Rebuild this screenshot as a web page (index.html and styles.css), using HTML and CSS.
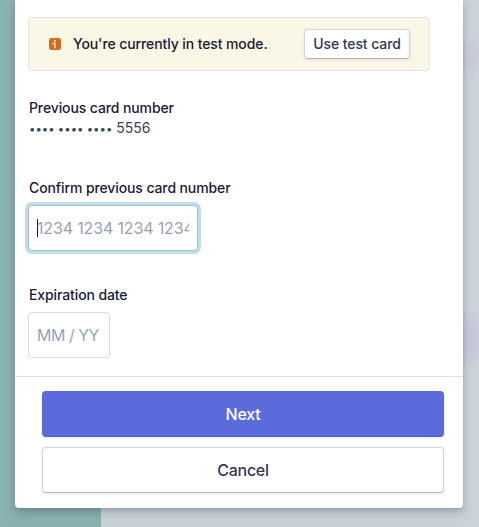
FILE: index.html
```html
<!DOCTYPE html>
<html lang="en">
<head>
<meta charset="utf-8">
<title>Confirm card</title>
<link rel="stylesheet" href="styles.css">
</head>
<body>
<main class="dialog">
  <section class="content">
    <div class="notice">
      <svg class="notice-icon" viewBox="0 0 12 12" aria-hidden="true">
        <rect width="12" height="12" rx="2" fill="#d56b21"/>
        <circle cx="6" cy="3" r="1" fill="#fff4df"/>
        <path d="M4 5.5h2.1v4.1" fill="none" stroke="#fff4df" stroke-width="1.3" stroke-linecap="round" stroke-linejoin="round"/>
      </svg>
      <span class="notice-text">You're currently in test mode.</span>
      <button class="button small">Use test card</button>
    </div>
    <div class="previous">
      <div class="label">Previous card number</div>
      <div class="masked"><span class="dots">•••• •••• ••••</span> 5556</div>
    </div>
    <div class="field confirm">
      <div class="label">Confirm previous card number</div>
      <div class="input focused"><span class="caret"></span><span class="placeholder">1234 1234 1234 1234</span></div>
    </div>
    <div class="field">
      <div class="label">Expiration date</div>
      <div class="input short"><span class="placeholder">MM / YY</span></div>
    </div>
  </section>
  <footer class="actions">
    <button class="button primary">Next</button>
    <button class="button">Cancel</button>
  </footer>
</main>
</body>
</html>
```
FILE: styles.css
```css
* { box-sizing: border-box; }
body {
  margin: 0;
  height: 527px;
  overflow: hidden;
  padding: 0 16px 19px 15px;
  font-family: Inter, "Liberation Sans", sans-serif;
  font-size: 14px;
  color: #1a1b32;
  background:
    linear-gradient(90deg, #8ab2b1 101px, transparent 101px),
    linear-gradient(#cbd3da 36px, #c6cdd8 55px, #cbd3da 80px, #cbd3da 312px, #c4cad8 328px, #c4cad8 350px, #cbd3da 368px);
}
.dialog {
  display: flex;
  flex-direction: column;
  height: 508px;
  background: #fff;
  border-radius: 0 0 4px 4px;
  box-shadow: 0 7px 14px rgba(60,66,87,.12), 0 3px 6px rgba(0,0,0,.18);
}
.content {
  height: 376px;
  padding: 17px 33px 0 13px;
}
.notice {
  display: flex;
  align-items: center;
  height: 54px;
  padding: 0 19px 0 20px;
  border: 1px solid #e0e4e8;
  border-radius: 4px;
  background: #fbf7e6;
}
.notice-icon { width: 12px; height: 12px; margin-right: 12px; }
.notice-text { font-weight: 500; line-height: 20px; letter-spacing: -.1px; }
.button {
  height: 46px;
  padding: 0;
  border: 1px solid #d5d5d7;
  border-bottom-color: #b5b5b7;
  border-radius: 4px;
  background: #fff;
  box-shadow: 0 1px 3px rgba(60,66,87,.12);
  color: #353850;
  font: 500 16px/20px Inter, "Liberation Sans", sans-serif;
  letter-spacing: -.25px;
}
.small {
  width: 106px;
  height: 30px;
  margin-left: auto;
  font-size: 14px;
  letter-spacing: -.08px;
}
.label {
  padding-left: 1px;
  font-weight: 500;
  line-height: 20px;
  letter-spacing: -.11px;
}
.previous { margin-top: 27px; }
.masked {
  height: 20px;
  padding-left: 1px;
  line-height: 20px;
  color: #3c4257;
}
.dots { font-size: 11.4px; line-height: 1; }
.confirm { margin: 40px 0 34px; }
.input {
  display: flex;
  align-items: center;
  width: 170px;
  height: 46px;
  margin-top: 7px;
  padding: 0 8px;
  border: 1px solid #d8dbe0;
  border-radius: 4px;
  background: #fff;
  color: #98a3b2;
  font-size: 16px;
}
.focused {
  border-color: #a2bfd3;
  box-shadow: 0 0 0 3px #bfdced;
}
.short { width: 82px; }
.placeholder {
  flex: 1;
  overflow: hidden;
  white-space: nowrap;
  letter-spacing: -.15px;
}
.short .placeholder { letter-spacing: -.5px; }
.caret {
  width: 1px;
  height: 18px;
  margin-right: -1px;
  background: #1a1b32;
}
.actions {
  display: flex;
  flex-direction: column;
  gap: 10px;
  height: 132px;
  padding: 14px 19px 0 27px;
  border-top: 1px solid #dde3ec;
}
.primary {
  border-color: #5b6bdb;
  border-bottom-color: #5360c6;
  background: #5b6bdb;
  color: #fff;
}
```
